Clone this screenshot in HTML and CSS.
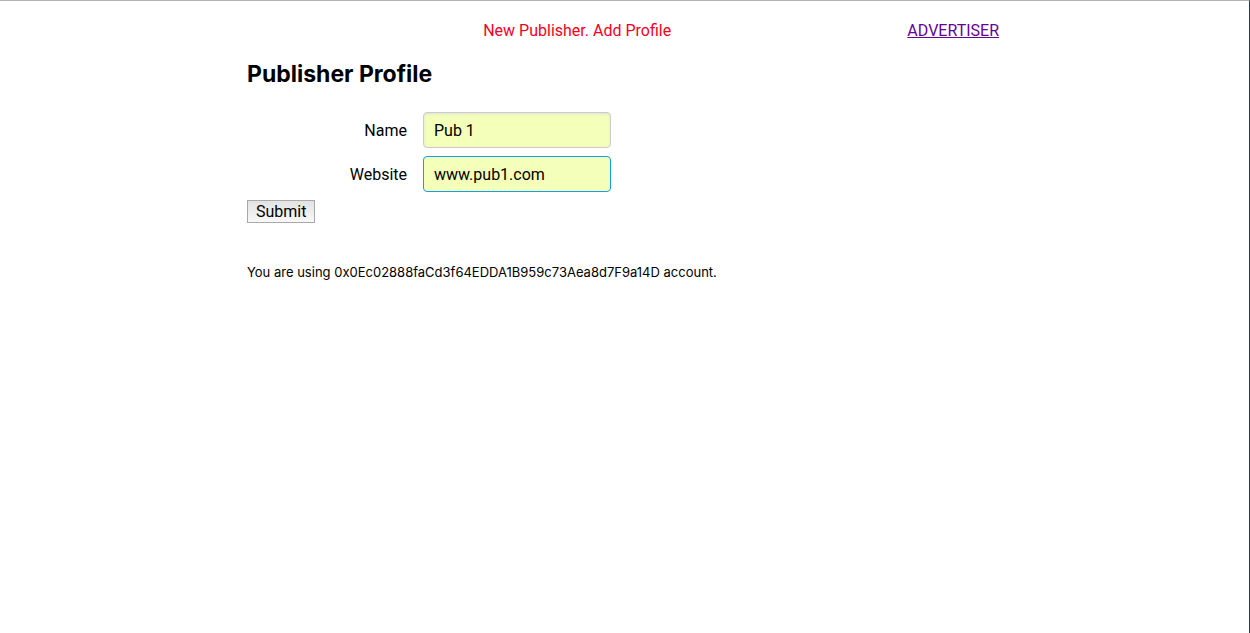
FILE: index.html
```html
<!DOCTYPE html>
<html lang="en">
<head>
<meta charset="utf-8">
<title>Publisher Profile</title>
<link rel="stylesheet" href="styles.css">
</head>
<body>
<div class="container">
  <header class="topbar">
    <span></span>
    <span class="notice">New Publisher. Add Profile</span>
    <a class="switch-link" href="#advertiser">ADVERTISER</a>
  </header>
  <main>
    <h1 class="title">Publisher Profile</h1>
    <form class="profile-form">
      <div class="control-group">
        <label class="label" for="name">Name</label>
        <input class="field" id="name" type="text" value="Pub 1">
      </div>
      <div class="control-group">
        <label class="label" for="website">Website</label>
        <input class="field field-active" id="website" type="text" value="www.pub1.com">
      </div>
      <button class="submit" type="submit">Submit</button>
    </form>
    <p class="account">You are using 0x0Ec02888faCd3f64EDDA1B959c73Aea8d7F9a14D account.</p>
  </main>
</div>
</body>
</html>
```
FILE: styles.css
```css
* {
  box-sizing: border-box;
}

html {
  min-height: 100%;
  border-top: 1px solid #b2b2b2;
  border-right: 1px solid #1c3c6c;
  background: #fff;
}

body {
  margin: 0;
  padding-right: 3px;
  font-family: Roboto, sans-serif;
  font-size: 16px;
  line-height: 20px;
  color: #000;
}

.container {
  width: 90%;
  max-width: 752px;
  margin: 0 auto;
  padding-top: 20px;
}

.topbar {
  display: flex;
  justify-content: space-between;
}

.notice {
  color: #f5001d;
}

.switch-link {
  color: #660099;
}

.title {
  margin: 19px 0 24px;
  font-family: Inter, sans-serif;
  font-size: 23px;
  line-height: 28px;
  font-weight: 700;
}

.profile-form {
  display: flex;
  flex-direction: column;
  align-items: flex-start;
  gap: 8px;
}

.control-group {
  display: flex;
  align-items: baseline;
  gap: 16px;
}

.label {
  width: 160px;
  text-align: right;
}

.field {
  width: 188px;
  height: 36px;
  padding: 8px 10px;
  border: 1px solid #ccc;
  border-radius: 4px;
  background: #f4ffb9;
  box-shadow: inset 0 1px 3px #ddd;
  font: inherit;
  color: #000;
  outline: 0;
}

.field-active {
  border-color: #129fea;
  box-shadow: none;
}

.submit {
  padding: 0 8px;
  border: 1px solid #a9a9a9;
  background: linear-gradient(#e2e2e2, #f8f8f8);
  font: inherit;
  line-height: 21px;
  color: #000;
}

.account {
  margin: 39px 0 0;
  font-family: Inter, sans-serif;
  font-size: 13px;
}
```
